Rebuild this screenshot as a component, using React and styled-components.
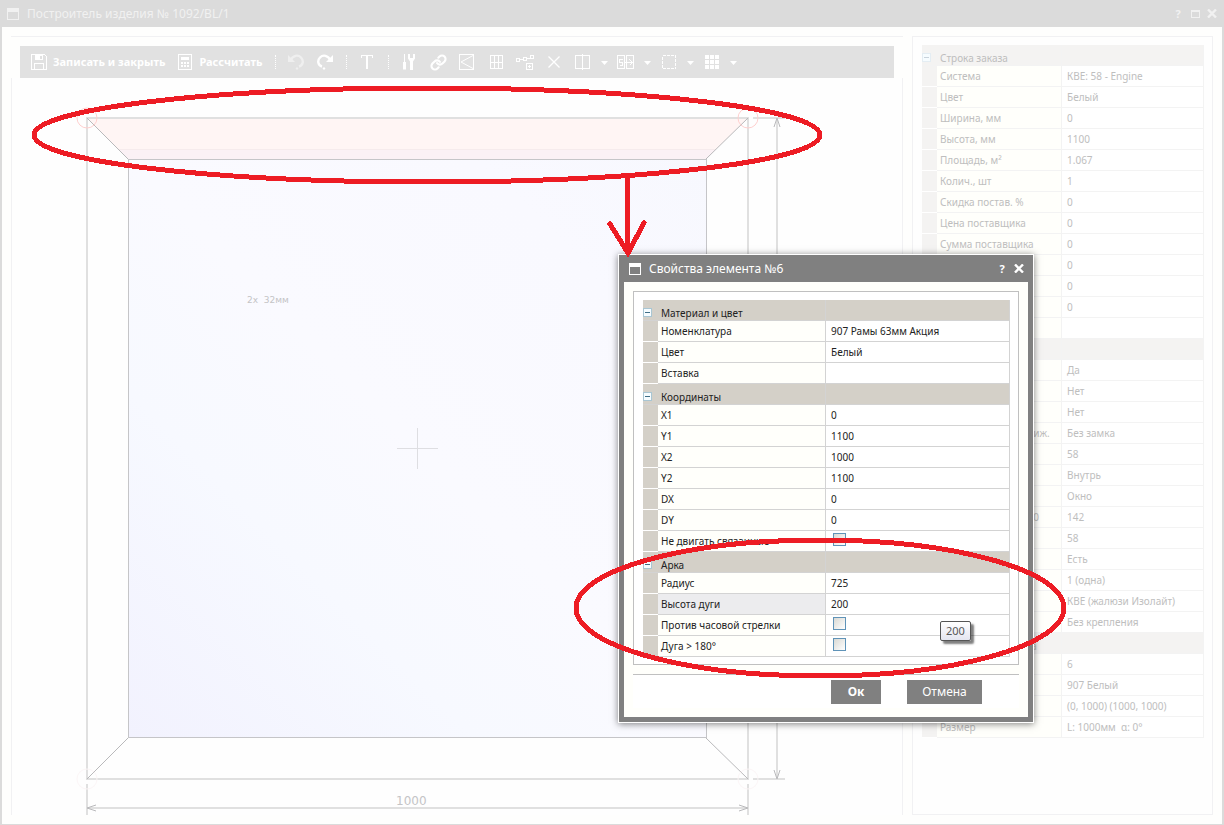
import React from 'react'
import styled, { createGlobalStyle, ThemeProvider } from 'styled-components'
import { Link } from 'lucide-react'

const mainTheme = {
  text: '#bebebe',
  line: '#f3f3f3',
  header: '#f4f3f2',
  frame: '#f1f1f3',
  expander: '#c9d3dc',
  expanderLine: '#e4edf3',
  labelWidth: 125
}

const dialogTheme = {
  text: '#222',
  line: '#d3d3d3',
  header: '#d4d0c8',
  frame: '#c0c0c0',
  expander: '#3f6f87',
  expanderLine: '#a9c6d3',
  labelWidth: 168
}

const orderGroups = [
  {
    title: 'Строка заказа',
    rows: [
      ['Система', 'КВЕ: 58 - Engine'],
      ['Цвет', 'Белый'],
      ['Ширина, мм', '0'],
      ['Высота, мм', '1100'],
      ['Площадь, м²', '1.067'],
      ['Колич., шт', '1'],
      ['Скидка постав. %', '0'],
      ['Цена поставщика', '0'],
      ['Сумма поставщика', '0'],
      ['Скидка %', '0'],
      ['Цена', '0'],
      ['Сумма', '0'],
      ['', '']
    ]
  },
  {
    title: 'Параметры',
    rows: [
      ['Подставка', 'Да'],
      ['Армирование', 'Нет'],
      ['Москитная', 'Нет'],
      ['Замок двери раздвиж.', 'Без замка'],
      ['Система', '58'],
      ['Открывание', 'Внутрь'],
      ['Тип', 'Окно'],
      ['Глубина монтажа 70', '142'],
      ['Профиль', '58'],
      ['Отлив', 'Есть'],
      ['Створка', '1 (одна)'],
      ['Жалюзи', 'КВЕ (жалюзи Изолайт)'],
      ['', 'Без крепления']
    ]
  },
  {
    title: 'Описание элемента',
    rows: [
      ['Номер', '6'],
      ['', '907 Белый'],
      ['Координаты', '(0, 1000) (1000, 1000)'],
      ['Размер', 'L: 1000мм  α: 0°']
    ]
  }
]

const elementGroups = [
  {
    title: 'Материал и цвет',
    rows: [
      ['Номенклатура', '907 Рамы 63мм Акция'],
      ['Цвет', 'Белый'],
      ['Вставка', '']
    ]
  },
  {
    title: 'Координаты',
    rows: [
      ['X1', '0'],
      ['Y1', '1100'],
      ['X2', '1000'],
      ['Y2', '1100'],
      ['DX', '0'],
      ['DY', '0'],
      ['Не двигать связанные', false]
    ]
  },
  {
    title: 'Арка',
    rows: [
      ['Радиус', '725'],
      ['Высота дуги', '200', true],
      ['Против часовой стрелки', false],
      ['Дуга > 180°', false]
    ]
  }
]

const GlobalStyle = createGlobalStyle`
  * {
    box-sizing: border-box;
  }
  body {
    margin: 0;
    font-family: 'Noto Sans', sans-serif;
    font-size: 10px;
  }
  button {
    margin: 0;
    padding: 0;
    border: 0;
    background: none;
    color: inherit;
    font: inherit;
  }
`

const Page = styled.div`
  position: relative;
  overflow: hidden;
`

const Window = styled.main`
  display: flex;
  flex-direction: column;
  min-height: 100vh;
  border: 2px solid #dbdbdb;
  border-width: 0 2px 1px;
  background: #fefefd;
`

const TitleBar = styled.header`
  display: flex;
  align-items: center;
  gap: 7px;
  height: 27px;
  padding: 0 5px;
  background: #dbdbdb;
  color: #f1f1f1;
  font-size: 12px;
`

const DialogTitleBar = styled(TitleBar)`
  padding: 0 9px 0 10px;
  background: #808080;
  color: #fff;
`

const Title = styled.h1`
  flex: 1;
  margin: 0;
  font-size: 12px;
  font-weight: 400;
  line-height: 16px;
  white-space: nowrap;
`

const TitleButton = styled.button`
  display: flex;
  justify-content: center;
  width: 10px;
  font-size: 11px;
  font-weight: 700;
  line-height: 14px;
`

const WindowBody = styled.div`
  display: flex;
  flex: 1;
  gap: 9px;
  padding: 9px;
`

const Workspace = styled.section`
  display: flex;
  flex: 1;
  flex-direction: column;
  min-width: 0;
`

const ToolbarArea = styled.div`
  padding: 9px 9px 0;
  border-top: 1px solid #f1f1f3;
`

const Toolbar = styled.div`
  display: flex;
  align-items: center;
  height: 32px;
  padding-left: 5px;
  background: #e1e1e1;
  color: #fff;
`

const LabelButton = styled.button`
  display: flex;
  align-items: center;
  gap: 6px;
  padding: 0 6px;
  font-size: 11px;
  font-weight: 700;
  line-height: 16px;
  white-space: nowrap;
`

const IconButton = styled.button`
  display: flex;
  align-items: center;
  justify-content: center;
  width: 29px;
  height: 18px;
  color: ${p => p.disabled ? '#efefef' : '#fff'};
`

const CaretButton = styled(IconButton)`
  width: 14px;
`

const Separator = styled.i`
  width: 1px;
  height: 14px;
  margin: 0 6px;
  border-left: 1px dotted #fff;
`

const Canvas = styled.div`
  flex: 1;
  overflow: hidden;
  border: 1px solid #f1f1f3;
  border-width: 0 1px;
  background: #fefefe;

  svg {
    display: block;
  }
`

const SidePanel = styled.aside`
  width: 301px;
  padding: 8px 8px 8px 9px;
  border: 1px solid ${p => p.theme.frame};
  background: #fefefe;
`

const Dialog = styled.section`
  position: absolute;
  top: 254px;
  left: 618px;
  width: 416px;
  border: 1px solid #fff;
  box-shadow: 0 1px 7px rgba(0, 0, 0, .5);
`

const DialogBody = styled.div`
  padding: 9px;
  border: 5px solid #808080;
  border-top: 0;
  background: #fffffb;
`

const GridFrame = styled.div`
  padding: 8px 8px 7px 9px;
  border: 1px solid ${p => p.theme.frame};
  background: #fff;
`

const DialogFooter = styled.footer`
  display: flex;
  justify-content: flex-end;
  gap: 26px;
  height: 34px;
  margin-top: 9px;
  padding: 5px 37px 0 0;
  border-top: 1px solid #c0c0c0;
  background: #fff;
`

const DialogButton = styled.button`
  width: ${p => p.$primary ? 50 : 75}px;
  height: 24px;
  background: #808080;
  color: #fff;
  font-size: 12px;
  font-weight: ${p => p.$primary ? 700 : 400};
  line-height: 22px;
`

const Grid = styled.table`
  width: 100%;
  border-spacing: 0;
  table-layout: fixed;
  color: ${p => p.theme.text};
  text-align: left;
`

const GutterCol = styled.col`
  width: 15px;
`

const LabelCol = styled.col`
  width: ${p => p.theme.labelWidth}px;
`

const GroupCell = styled.th`
  height: 21px;
  padding: 0;
  border-right: 1px solid ${p => p.theme.line};
  border-bottom: 1px solid ${p => p.theme.line};
  background: ${p => p.theme.header};
  font-weight: 400;
`

const GroupTitle = styled.div`
  display: flex;
  align-items: center;
  gap: 9px;
  height: 20px;
  padding-top: 5px;
`

const Expander = styled.button`
  display: flex;
  align-items: center;
  justify-content: center;
  width: 9px;
  height: 9px;
  border: 1px solid ${p => p.theme.expanderLine};
  background: #f6fcff;

  &::before {
    content: '';
    width: 5px;
    height: 1px;
    background: ${p => p.theme.expander};
  }
`

const GutterCell = styled.td`
  padding: 0;
  border-bottom: 1px solid #fff;
  background: ${p => p.theme.header};
`

const LabelCell = styled.th`
  height: 21px;
  padding: 0 0 0 3px;
  border-right: 1px solid ${p => p.theme.line};
  border-bottom: 1px solid ${p => p.theme.line};
  background: ${p => p.$active ? '#ececee' : '#fffffb'};
  font-weight: 400;
  line-height: 20px;
  white-space: nowrap;
`

const ValueCell = styled.td`
  padding: 0 0 0 5px;
  border-right: 1px solid ${p => p.theme.line};
  border-bottom: 1px solid ${p => p.theme.line};
  background: #fff;
  line-height: 20px;
  white-space: pre;
`

const Checkbox = styled.input`
  display: block;
  width: 13px;
  height: 13px;
  margin: 2px 0 5px 2px;
  border: 1px solid #5f93b8;
  background: linear-gradient(135deg, #d9d9d4, #fff);
  appearance: none;
`

const Tooltip = styled.div`
  position: absolute;
  top: 621px;
  left: 940px;
  padding: 0 5px;
  border: 1px solid #555;
  border-radius: 2px;
  background: linear-gradient(#fff, #e4e5f0);
  box-shadow: 3px 3px 2px rgba(0, 0, 0, .5);
  color: #575757;
  font-size: 11px;
  line-height: 18px;
`

const Marks = styled.svg`
  position: absolute;
  top: 0;
  left: 0;
  pointer-events: none;
`

const WindowIcon = () => (
  <svg width='13' height='12' fill='currentColor' shapeRendering='crispEdges'>
    <path d='M0 0h12v12H0zM1 4v7h10V4z' fillRule='evenodd' />
  </svg>
)

const MaximizeIcon = () => (
  <svg width='9' height='8' fill='currentColor' shapeRendering='crispEdges'>
    <path d='M0 0h9v8H0zM1 2v5h7V2z' fillRule='evenodd' />
  </svg>
)

const CloseIcon = () => (
  <svg width='10' height='9' stroke='currentColor' strokeWidth='2.4'>
    <path d='M1 0.5l8 8M9 0.5l-8 8' />
  </svg>
)

const Icon = ({ size = 16, crisp = true, children }) => (
  <svg
    width={size}
    height='18'
    viewBox={`0 0 ${size} 18`}
    fill='none'
    stroke='currentColor'
    shapeRendering={crisp ? 'crispEdges' : 'auto'}
  >
    {children}
  </svg>
)

const SaveIcon = () => (
  <Icon>
    <path d='M.5 1.5h13l2 2v13H.5z' />
    <path d='M3.5 16V10.5h9V16' />
    <path d='M4 2h8v5H4z' fill='currentColor' stroke='none' />
    <path d='M9 2.5h2v3H9z' fill='#e1e1e1' stroke='none' />
  </Icon>
)

const CalculatorIcon = () => (
  <Icon>
    <path d='M1.5 1.5h13v15h-13z' />
    <path d='M4 4h8v3H4z' fill='currentColor' stroke='none' />
    <path d='M4 10h9M4 13h9' strokeWidth='2' strokeDasharray='2 1' />
  </Icon>
)

const UndoIcon = () => (
  <Icon crisp={false}>
    <path d='M2.5 7.5C5 2 10 1.5 13 4.5c3 3 2 8-2 9' strokeWidth='2.4' />
    <path d='M0 2v7h7z' fill='currentColor' stroke='none' />
    <path d='M7.500 15.500L9 14l1.500 1.500L9 17z' fill='currentColor' stroke='none' />
  </Icon>
)

const RedoIcon = () => (
  <Icon crisp={false}>
    <path d='M13.5 7.500C11 2 6 1.500 3 4.500c-3 3-2 8 2 9' strokeWidth='2.4' />
    <path d='M16 2v7H9z' fill='currentColor' stroke='none' />
    <path d='M5.500 15.500L7 14l1.500 1.500L7 17z' fill='currentColor' stroke='none' />
  </Icon>
)

const TextIcon = () => (
  <Icon size={12}>
    <path d='M0 2.5h12' />
    <path d='M.5 2v3M11.5 2v3' />
    <path d='M6 2v14' strokeWidth='2' />
  </Icon>
)

const ToolsIcon = () => (
  <Icon size={14} crisp={false}>
    <path d='M2.5 1v8' />
    <path d='M2.5 9v7.5' strokeWidth='3' />
    <path d='M6 1h2v4h3V1h2v4.500l-2 3V17H8V8.500l-2-3z' fill='currentColor' stroke='none' />
  </Icon>
)

const FlapIcon = () => (
  <Icon crisp={false}>
    <path d='M.5 1.5h14v15H.5z' shapeRendering='crispEdges' />
    <path d='M14 2.5L2 9l12 6.5' />
  </Icon>
)

const LayoutIcon = () => (
  <Icon size={13}>
    <path d='M.5 2.5h12v13H.5zM4.5 2v14M8.500 2v14M0 9.500h13' />
  </Icon>
)

const NodesIcon = () => (
  <Icon size={18}>
    <path d='M.5 5.5h3v3h-3zM7.5 4.5h3v3h-3zM14.5 2.5h3v3h-3zM4 6.500h3M11 5.500h3' />
    <path d='M10.5 10.5h6v6h-6zM12 13.5h3M13.5 12v3' />
  </Icon>
)

const DeleteIcon = () => (
  <Icon size={12} crisp={false}>
    <path d='M.5 3.5l11 11M11.5 3.5l-11 11' strokeWidth='1.3' />
  </Icon>
)

const SplitIcon = () => (
  <Icon>
    <path d='M.5 2.5h14v13H.5zM7.5 1v16' />
  </Icon>
)

const ReplaceIcon = () => (
  <Icon size={18}>
    <path d='M.5 2.5h7v13h-7zM9.5 2.5h7v13h-7z' />
    <path d='M5.5 6.5h-3v2.500h3V12.500h-3M7 9.500h8M12.500 6.500l3 3-3 3' />
  </Icon>
)

const SelectionIcon = () => (
  <Icon size={14}>
    <path d='M.5 2.5h13v13H.5z' strokeDasharray='3 1' />
  </Icon>
)

const TilesIcon = () => (
  <Icon size={14}>
    <path d='M0 4h14M0 9h14M0 14h14' strokeWidth='4' strokeDasharray='4 1' />
  </Icon>
)

const Caret = () => (
  <svg width='8' height='18' fill='currentColor'>
    <path d='M0 8h7L3.5 12z' />
  </svg>
)

const Menu = ({ title, children }) => (
  <React.Fragment>
    <IconButton aria-label={title}>{children}</IconButton>
    <CaretButton aria-label={`${title}: меню`}><Caret /></CaretButton>
  </React.Fragment>
)

const Drawing = () => (
  <svg width='890' height='737' viewBox='12 78 890 737' shapeRendering='crispEdges'>
    <defs>
      <linearGradient id='glass' x1='0' y1='1' x2='1' y2='0'>
        <stop offset='0' stopColor='#f2f2fe' />
        <stop offset='.3' stopColor='#f7f9ff' />
        <stop offset='.5' stopColor='#fafaff' />
        <stop offset='.8' stopColor='#f9f9ff' />
        <stop offset='1' stopColor='#f7f8fe' />
      </linearGradient>
    </defs>
    <path d='M87 118h661l-42 41H128z' fill='#fff5f4' />
    <path d='M119 150h597l-10 9H128z' fill='#fbf1f5' />
    <path d='M118 149.5h598' stroke='#f6ebec' />
    <rect x='128.5' y='159.5' width='578' height='578' fill='url(#glass)' stroke='#c5c5c8' />
    <g fill='none' stroke='#e0e0e0' strokeWidth='2'>
      <path d='M87 118h661v661H87z' />
      <path d='M753 118h32M753 779h32M777 118v661' />
      <path d='M87 784v31M748 784v31M87 808h661' />
    </g>
    <g fill='none' stroke='#b9b9bb' shapeRendering='auto'>
      <path d='M87 118l41 41M748 118l-42 41M87 779l41-41M748 779l-42-41' />
      <path d='M774 127l3-9 3 9M774 770l3 9 3-9M96 805l-9 3 9 3M739 805l9 3-9 3' />
    </g>
    <g fill='none' stroke='#ffd0cf' shapeRendering='auto'>
      <circle cx='87' cy='118' r='10' />
      <circle cx='748' cy='118' r='10' />
    </g>
    <g fill='none' stroke='#fcf6f7' shapeRendering='auto'>
      <circle cx='87' cy='779' r='10' />
      <circle cx='748' cy='779' r='10' />
    </g>
    <path d='M397 448.5h41M417.5 428v41' stroke='#dedee2' />
    <g fill='#c4c4c6' fontFamily='DejaVu Sans, sans-serif'>
      <text x='247' y='303' fontSize='9' xmlSpace='preserve'>2x  32мм</text>
      <text x='396' y='805' fontSize='12'>1000</text>
    </g>
  </svg>
)

const PropertyGrid = ({ name, groups }) => (
  <Grid aria-label={name}>
    <colgroup>
      <GutterCol />
      <LabelCol />
      <col />
    </colgroup>
    {groups.map(group => (
      <tbody key={group.title}>
        <tr>
          <GroupCell colSpan='2'>
            <GroupTitle>
              <Expander aria-label='Свернуть' />
              {group.title}
            </GroupTitle>
          </GroupCell>
          <GroupCell />
        </tr>
        {group.rows.map(([label, value, active]) => (
          <tr key={label}>
            <GutterCell />
            <LabelCell $active={active}>
              {value === false ? <label htmlFor={label}>{label}</label> : label}
            </LabelCell>
            <ValueCell>
              {value === false ? <Checkbox id={label} type='checkbox' /> : value}
            </ValueCell>
          </tr>
        ))}
      </tbody>
    ))}
  </Grid>
)

const MainToolbar = () => (
  <Toolbar>
    <LabelButton><SaveIcon />Записать и закрыть</LabelButton>
    <LabelButton><CalculatorIcon />Рассчитать</LabelButton>
    <Separator />
    <IconButton aria-label='Отменить' disabled><UndoIcon /></IconButton>
    <IconButton aria-label='Вернуть'><RedoIcon /></IconButton>
    <Separator />
    <IconButton aria-label='Текст'><TextIcon /></IconButton>
    <Separator />
    <IconButton aria-label='Настройки'><ToolsIcon /></IconButton>
    <IconButton aria-label='Связать'><Link size={17} strokeWidth={3} /></IconButton>
    <IconButton aria-label='Створка'><FlapIcon /></IconButton>
    <IconButton aria-label='Раскладка'><LayoutIcon /></IconButton>
    <IconButton aria-label='Добавить узел'><NodesIcon /></IconButton>
    <IconButton aria-label='Удалить'><DeleteIcon /></IconButton>
    <Menu title='Разделить'><SplitIcon /></Menu>
    <Menu title='Заменить'><ReplaceIcon /></Menu>
    <Menu title='Выделить'><SelectionIcon /></Menu>
    <Menu title='Сетка'><TilesIcon /></Menu>
  </Toolbar>
)

const ElementDialog = () => (
  <Dialog role='dialog' aria-label='Свойства элемента №6'>
    <DialogTitleBar>
      <WindowIcon />
      <Title as='h2'>Свойства элемента №6</Title>
      <TitleButton>?</TitleButton>
      <TitleButton aria-label='Закрыть'><CloseIcon /></TitleButton>
    </DialogTitleBar>
    <DialogBody>
      <GridFrame>
        <PropertyGrid name='Свойства элемента' groups={elementGroups} />
      </GridFrame>
      <DialogFooter>
        <DialogButton $primary>Ок</DialogButton>
        <DialogButton>Отмена</DialogButton>
      </DialogFooter>
    </DialogBody>
  </Dialog>
)

const App = () => (
  <ThemeProvider theme={mainTheme}>
    <GlobalStyle />
    <Page>
      <Window>
        <TitleBar>
          <WindowIcon />
          <Title>Построитель изделия № 1092/BL/1</Title>
          <TitleButton>?</TitleButton>
          <TitleButton aria-label='Развернуть'><MaximizeIcon /></TitleButton>
          <TitleButton aria-label='Закрыть'><CloseIcon /></TitleButton>
        </TitleBar>
        <WindowBody>
          <Workspace>
            <ToolbarArea>
              <MainToolbar />
            </ToolbarArea>
            <Canvas>
              <Drawing />
            </Canvas>
          </Workspace>
          <SidePanel>
            <PropertyGrid name='Строка заказа' groups={orderGroups} />
          </SidePanel>
        </WindowBody>
      </Window>
      <ThemeProvider theme={dialogTheme}>
        <ElementDialog />
      </ThemeProvider>
      <Tooltip role='tooltip'>200</Tooltip>
      <Marks width='1224' height='825' fill='none' stroke='#ed1c24' strokeWidth='5' shapeRendering='crispEdges'>
        <ellipse cx='427' cy='135' rx='393' ry='47' />
        <ellipse cx='820' cy='608' rx='244' ry='68' />
        <path d='M627.5 178v72M610 224l18 29L644 223' strokeLinecap='round' />
      </Marks>
    </Page>
  </ThemeProvider>
)

export default App
